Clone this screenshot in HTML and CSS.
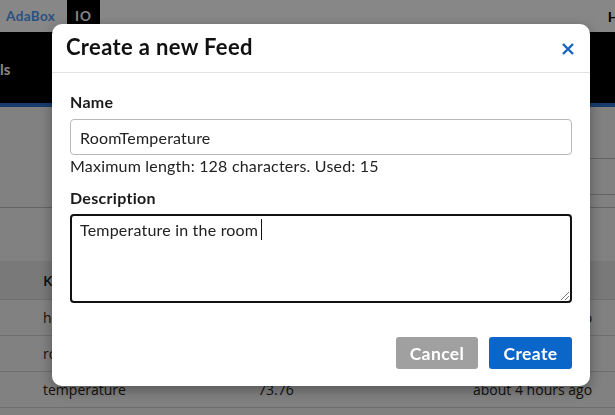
FILE: index.html
```html
<!DOCTYPE html>
<html>
<head>
<meta charset="utf-8">
<link rel="stylesheet" href="styles.css">
</head>
<body>
<div class="page">
  <header class="topbar">
    <a class="brand">AdaBox</a>
    <span class="io">IO</span>
    <span class="spacer"></span>
    <span class="topright">H</span>
  </header>
  <nav class="navband">
    <span class="navtext">ls</span>
  </nav>
  <div class="content">
    <div class="toolbar">
      <div class="search"></div>
    </div>
    <div class="gap"></div>
    <table class="feeds">
      <thead>
        <tr><th>Key</th><th>Last value</th><th>Recorded</th></tr>
      </thead>
      <tbody>
        <tr><td>humidity</td><td>41.2</td><td>about 4 hours ago</td></tr>
        <tr><td>roomtemperature</td><td></td><td></td></tr>
        <tr><td>temperature</td><td>73.76</td><td>about 4 hours ago</td></tr>
      </tbody>
    </table>
  </div>
</div>
<div class="overlay"></div>
<div class="modal">
  <div class="modal-header">
    <h2 class="modal-title">Create a new Feed</h2>
    <button class="close" aria-label="Close">
      <svg width="14" height="14" viewBox="0 0 14 14"><path d="M2 2L12 12M12 2L2 12" stroke="#1565c0" stroke-width="2.4" stroke-linecap="butt"/></svg>
    </button>
  </div>
  <div class="modal-body">
    <label class="label">Name</label>
    <div class="input">RoomTemperature</div>
    <p class="help">Maximum length: 128 characters. Used: 15</p>
    <label class="label label-desc">Description</label>
    <div class="textarea">Temperature in the room<span class="caret"></span></div>
  </div>
  <div class="modal-footer">
    <button class="btn btn-cancel">Cancel</button>
    <button class="btn btn-create">Create</button>
  </div>
</div>
</body>
</html>
```

FILE: styles.css
```css
html, body {
  margin: 0;
  padding: 0;
  width: 615px;
  height: 415px;
  overflow: hidden;
  font-family: Lato, "Open Sans", sans-serif;
  background: #f2f2f2;
}

.page {
  width: 615px;
}

.topbar {
  height: 32px;
  background: #ffffff;
  display: flex;
  align-items: stretch;
  font-size: 13.5px;
  font-weight: 700;
  letter-spacing: 0.4px;
}
.brand {
  color: #4f9bf0;
  padding: 0 7px 0 6px;
  display: flex;
  align-items: center;
  width: 54px;
}
.io {
  background: #000;
  color: #ffffff;
  width: 33px;
  display: flex;
  align-items: center;
  justify-content: center;
  letter-spacing: 1px;
}
.spacer { flex: 1; }
.topright {
  color: #000;
  display: flex;
  align-items: center;
  margin-right: -4px;
  font-size: 14px;
}

.navband {
  height: 71px;
  background: #000;
  border-bottom: 4px solid #2e6fcc;
  display: flex;
  align-items: center;
}
.navtext {
  color: #fff;
  font-weight: 700;
  font-size: 15px;
  margin-top: 2px;
}

.content {
  background: #f4f4f4;
}
.toolbar {
  height: 101px;
  border-bottom: 1px solid #bdbdbd;
  display: flex;
  justify-content: flex-end;
  box-sizing: border-box;
}
.search {
  margin-top: 51px;
  width: 60px;
  height: 37px;
  box-sizing: border-box;
  border: 1px solid #bdbdbd;
  border-right: none;
}
.gap { height: 53px; }

.feeds {
  width: 100%;
  border-collapse: collapse;
  font-family: "Open Sans", Lato, sans-serif;
  font-size: 14px;
  color: #222;
}
.feeds th, .feeds td {
  text-align: left;
  padding: 0;
  height: 35px;
  border-bottom: 1px solid #d0d0d0;
}
.feeds th {
  height: 38px;
  background: #e4e4e4;
  font-weight: 600;
  font-size: 15px;
}
.feeds th:first-child, .feeds td:first-child { padding-left: 43px; width: 215px; }
.feeds th:nth-child(2), .feeds td:nth-child(2) { width: 215px; }

.overlay {
  position: fixed;
  inset: 0;
  background: rgba(0, 0, 0, 0.47);
}

.modal {
  position: fixed;
  left: 52px;
  top: 24px;
  width: 538px;
  height: 362px;
  background: #fff;
  border-radius: 10px;
  box-shadow: 0 4px 14px rgba(0, 0, 0, 0.35);
  display: flex;
  flex-direction: column;
  color: #1a1a1a;
  letter-spacing: 0.2px;
}

.modal-header {
  height: 48px;
  border-bottom: 1px solid #e3e3e3;
  display: flex;
  align-items: center;
  padding: 0 14px;
}
.modal-title {
  flex: 1;
  margin: 0;
  font-size: 22px;
  line-height: 26px;
  font-weight: 700;
  letter-spacing: 0.35px;
  color: #111;
  margin-top: -2px;
}
.close {
  border: none;
  background: transparent;
  padding: 0;
  width: 14px;
  height: 14px;
  margin-right: 1px;
  margin-top: 2px;
  display: flex;
}

.modal-body {
  padding: 19px 18px 0;
  display: flex;
  flex-direction: column;
}
.label {
  display: block;
  font-size: 16px;
  font-weight: 700;
  line-height: 20px;
  color: #1a1a1a;
  letter-spacing: 0.3px;
}
.input {
  margin-top: 7px;
  height: 36px;
  box-sizing: border-box;
  border: 1px solid #b8b8b8;
  border-radius: 4px;
  padding: 0 9px;
  display: flex;
  align-items: center;
  font-size: 16px;
  color: #222;
}
.help {
  margin: 0;
  font-size: 16px;
  line-height: 22px;
  color: #222;
}
.label-desc { margin-top: 11px; }
.textarea {
  position: relative;
  margin-top: 6px;
  height: 89px;
  box-sizing: border-box;
  border: 2px solid #111;
  border-radius: 4px;
  padding: 3px 8px;
  font-size: 16px;
  line-height: 22px;
  color: #222;
}
.caret {
  display: inline-block;
  width: 1px;
  height: 21px;
  background: #111;
  margin-left: 3px;
  vertical-align: top;
}
.textarea::after {
  content: "";
  position: absolute;
  right: 1px;
  bottom: 1px;
  width: 8px;
  height: 8px;
  background: linear-gradient(135deg, transparent 45%, #777 45%, #777 52%, transparent 52%, transparent 70%, #777 70%, #777 77%, transparent 77%);
}

.modal-footer {
  margin-top: auto;
  padding: 0 18px 17px;
  display: flex;
  justify-content: flex-end;
  gap: 11px;
}
.btn {
  height: 32px;
  border: none;
  border-radius: 3px;
  color: #fff;
  font-family: inherit;
  font-size: 17.5px;
  font-weight: 700;
  letter-spacing: 0.4px;
  padding: 0;
}
.btn-cancel { width: 82px; background: #a0a0a0; }
.btn-create { width: 83px; background: #0a66c8; }
```
